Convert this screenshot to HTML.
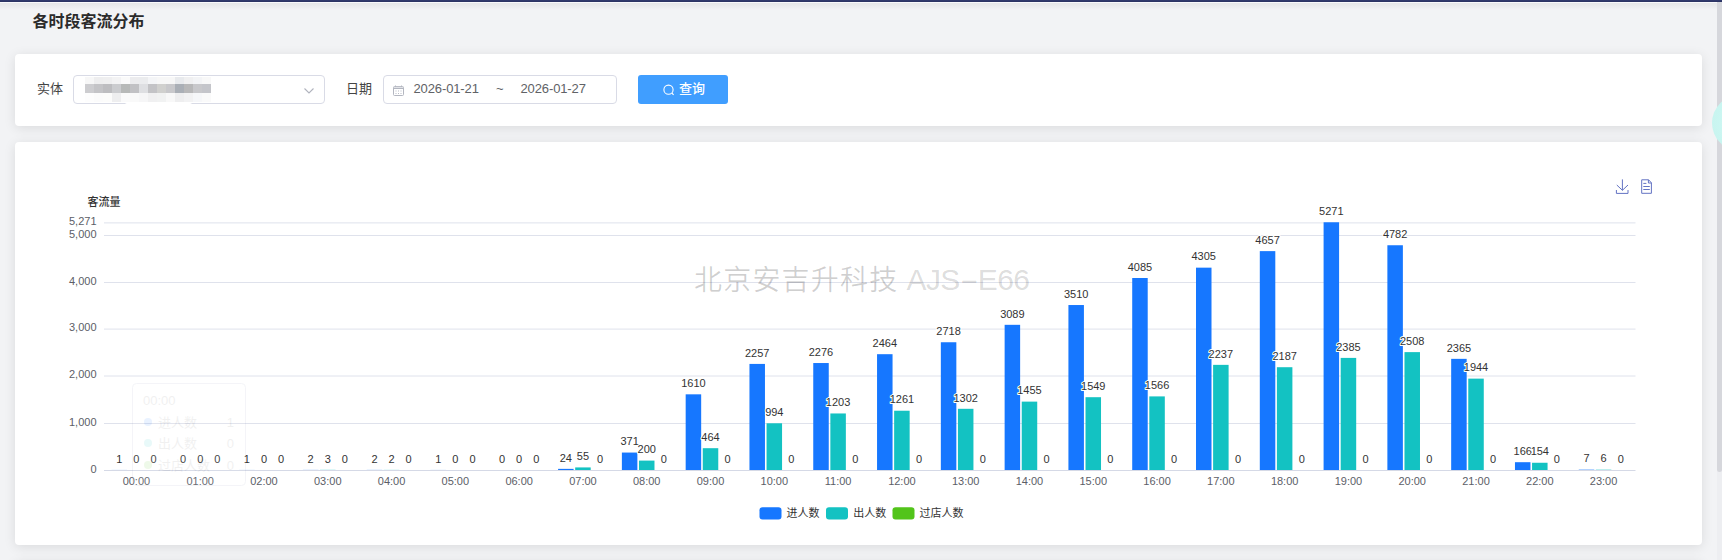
<!DOCTYPE html>
<html lang="zh-CN"><head><meta charset="utf-8"><title>各时段客流分布</title>
<style>
html,body{margin:0;padding:0}
body{width:1722px;height:560px;overflow:hidden;position:relative;background:#f2f3f5;font-family:"Liberation Sans","Noto Sans CJK SC",sans-serif;color:#333}
.topbar{position:absolute;left:0;top:0;width:1722px;height:2px;background:linear-gradient(#323c70,#2a3260)}
.topline{position:absolute;left:0;top:2px;width:1722px;height:1px;background:#f9f9fb}
.topsh{position:absolute;left:0;top:3px;width:1722px;height:7px;background:linear-gradient(rgba(0,0,0,.055),rgba(0,0,0,0))}
.title{position:absolute;left:32.5px;top:11px;font-size:16px;font-weight:700;line-height:22px;color:#2b2b2b;letter-spacing:0}
.card{position:absolute;background:#fff;border-radius:4px;box-shadow:0 2px 12px 0 rgba(0,0,0,.1)}
.c1{left:15px;top:54px;width:1687px;height:72px}
.c2{left:15px;top:142px;width:1687px;height:403px}
.c3{left:15px;top:561px;width:1687px;height:100px}
.lbl{position:absolute;font-size:13px;line-height:18px;color:#444;top:80px}
.box{position:absolute;top:75px;height:27px;border:1px solid #d9dbe6;border-radius:4px;background:#fff}
.box span{position:absolute;top:4.5px;font-size:13px;letter-spacing:-0.12px;line-height:16px;color:#606266;white-space:nowrap}
.mos i{position:absolute;width:9.1px;height:9px;display:block}
.mos b{position:absolute;display:block;background:#fff}
.btn{position:absolute;left:638px;top:75px;width:90px;height:29px;border-radius:3px;background:#409eff;color:#fff;font-size:13px;font-weight:500}
.btn span{position:absolute;left:41px;top:5px;line-height:18px}
.chart{position:absolute;left:15px;top:142px}
.chart .v{paint-order:stroke;stroke:#fff;stroke-width:2px;stroke-linejoin:round;letter-spacing:0}
.chart .n{letter-spacing:0}
.sb{position:absolute;left:1717px;top:2px;width:5px;height:558px;background:#edeef1}
.sb b{position:absolute;left:0;top:0;width:5px;height:470px;border-radius:0 0 3px 3px;background:#d6d7dc;display:block}
.bubble{position:absolute;left:1711.5px;top:95px;width:56px;height:56px;border-radius:50%;background:radial-gradient(circle,#d2f8f4 0%,#c8f5f0 70%,#bff0ea 100%)}
</style></head><body>
<div class="topbar"></div><div class="topline"></div><div class="topsh"></div>
<div class="title">各时段客流分布</div>
<div class="card c1"></div>
<div class="lbl" style="left:37px">实体</div>
<div class="box" style="left:73px;width:250px"><svg width="12" height="8" viewBox="0 0 12 8" style="position:absolute;left:229px;top:11px"><path d="M1.5 1.5L6 6L10.5 1.5" fill="none" stroke="#b0b3bd" stroke-width="1.1"/></svg></div>
<div class="mos"><b style="left:123px;top:100px;width:71px;height:8px;border-radius:0 0 40px 40px/0 0 8px 8px"></b><i style="left:84.90px;top:77px;height:7px;background:#f7f7f7"></i><i style="left:84.90px;top:84px;background:rgb(205, 205, 208)"></i><i style="left:84.90px;top:93px;background:#fdfdfd"></i><i style="left:93.92px;top:77px;height:7px;background:#eeeeef"></i><i style="left:93.92px;top:84px;background:rgb(196, 196, 199)"></i><i style="left:93.92px;top:93px;background:#fbfbfb"></i><i style="left:102.93px;top:77px;height:7px;background:#efeff0"></i><i style="left:102.93px;top:84px;background:rgb(189, 189, 192)"></i><i style="left:102.93px;top:93px;background:#fcfcfb"></i><i style="left:111.95px;top:77px;height:7px;background:#f3f3f4"></i><i style="left:111.95px;top:84px;background:rgb(203, 204, 207)"></i><i style="left:111.95px;top:93px;background:#eeeeef"></i><i style="left:120.96px;top:77px;height:7px;background:#fafafa"></i><i style="left:120.96px;top:84px;background:rgb(183, 185, 184)"></i><i style="left:120.96px;top:93px;background:#fafafa"></i><i style="left:129.98px;top:77px;height:7px;background:#ececee"></i><i style="left:129.98px;top:84px;background:rgb(193, 193, 196)"></i><i style="left:129.98px;top:93px;background:#f9f9f9"></i><i style="left:138.99px;top:77px;height:7px;background:#ebecee"></i><i style="left:138.99px;top:84px;background:rgb(222, 223, 226)"></i><i style="left:138.99px;top:93px;background:#f6f6f7"></i><i style="left:148.00px;top:77px;height:7px;background:#f4f5f7"></i><i style="left:148.00px;top:84px;background:rgb(195, 195, 198)"></i><i style="left:148.00px;top:93px;background:#f0f0f1"></i><i style="left:157.02px;top:77px;height:7px;background:#f7f7f7"></i><i style="left:157.02px;top:84px;background:rgb(208, 208, 206)"></i><i style="left:157.02px;top:93px;background:#f1f2f2"></i><i style="left:166.04px;top:77px;height:7px;background:#f7f7f7"></i><i style="left:166.04px;top:84px;background:rgb(200, 200, 203)"></i><i style="left:166.04px;top:93px;background:#f8f8f8"></i><i style="left:175.05px;top:77px;height:7px;background:#e8eaed"></i><i style="left:175.05px;top:84px;background:rgb(170, 175, 182)"></i><i style="left:175.05px;top:93px;background:#eeeeef"></i><i style="left:184.06px;top:77px;height:7px;background:#f0f0f1"></i><i style="left:184.06px;top:84px;background:rgb(184, 184, 185)"></i><i style="left:184.06px;top:93px;background:#f2f2f3"></i><i style="left:193.08px;top:77px;height:7px;background:#f3f4f6"></i><i style="left:193.08px;top:84px;background:rgb(200, 200, 203)"></i><i style="left:193.08px;top:93px;background:#f6f7f9"></i><i style="left:202.10px;top:77px;height:7px;background:#f8f8f8"></i><i style="left:202.10px;top:84px;background:rgb(196, 197, 202)"></i><i style="left:202.10px;top:93px;background:#fafafa"></i></div>
<div class="lbl" style="left:346px">日期</div>
<div class="box" style="left:383px;width:232px">
<svg width="11" height="11" viewBox="0 0 11 11" style="position:absolute;left:9px;top:9px"><rect x="0.5" y="1.5" width="10" height="9" rx="1" fill="none" stroke="#b3b6c0"/><path d="M0.5 3.5H10.5" stroke="#b3b6c0"/><path d="M1 2H10" stroke="#c4c7cf"/><path d="M2.5 0.5V2M8.5 0.5V2" stroke="#b3b6c0"/><path d="M2.5 6H3.5M5 6H6M7.5 6H8.5M2.5 8.5H3.5M5 8.5H6M7.5 8.5H8.5" stroke="#b9bcc5" stroke-width="1.2"/></svg>
<span style="left:29.5px">2026-01-21</span><span style="left:112px">~</span><span style="left:136.5px">2026-01-27</span></div>
<div class="btn"><svg width="14" height="14" viewBox="0 0 14 14" style="position:absolute;left:24px;top:8px"><circle cx="6.5" cy="6.7" r="4.6" fill="none" stroke="#fff" stroke-width="1.1"/><path d="M9.8 10L11.6 11.8" stroke="#fff" stroke-width="1.1" fill="none"/></svg><span>查询</span></div>
<div class="card c2"></div><div class="card c3"></div>
<svg class="chart" width="1687" height="403" viewBox="15 142 1687 403" font-family="Liberation Sans, Noto Sans CJK SC, sans-serif">
<line x1="104" x2="1635.5" y1="470.50" y2="470.50" stroke="#d5d9e6" stroke-width="1"/>
<text x="96.5" y="472.50" font-size="11" fill="#5c5e67" text-anchor="end" class="n">0</text>
<line x1="104" x2="1635.5" y1="423.50" y2="423.50" stroke="#dfe2ec" stroke-width="1"/>
<text x="96.5" y="425.50" font-size="11" fill="#5c5e67" text-anchor="end" class="n">1,000</text>
<line x1="104" x2="1635.5" y1="376.00" y2="376.00" stroke="#dfe2ec" stroke-width="1"/>
<text x="96.5" y="378.00" font-size="11" fill="#5c5e67" text-anchor="end" class="n">2,000</text>
<line x1="104" x2="1635.5" y1="329.10" y2="329.10" stroke="#dfe2ec" stroke-width="1"/>
<text x="96.5" y="331.10" font-size="11" fill="#5c5e67" text-anchor="end" class="n">3,000</text>
<line x1="104" x2="1635.5" y1="282.50" y2="282.50" stroke="#dfe2ec" stroke-width="1"/>
<text x="96.5" y="284.50" font-size="11" fill="#5c5e67" text-anchor="end" class="n">4,000</text>
<line x1="104" x2="1635.5" y1="235.50" y2="235.50" stroke="#dfe2ec" stroke-width="1"/>
<text x="96.5" y="237.50" font-size="11" fill="#5c5e67" text-anchor="end" class="n">5,000</text>
<line x1="104" x2="1635.5" y1="222.90" y2="222.90" stroke="#dfe2ec" stroke-width="1"/>
<text x="96.5" y="224.90" font-size="11" fill="#5c5e67" text-anchor="end" class="n">5,271</text>
<text x="104" y="206" font-size="11" fill="#333" text-anchor="middle" font-weight="500">客流量</text>
<rect x="111.55" y="469.95" width="15.5" height="0.05" fill="#1677ff"/>
<rect x="239.13" y="469.95" width="15.5" height="0.05" fill="#1677ff"/>
<rect x="302.92" y="469.91" width="15.5" height="0.09" fill="#1677ff"/>
<rect x="320.02" y="469.86" width="15.5" height="0.14" fill="#13c2c2"/>
<rect x="366.71" y="469.91" width="15.5" height="0.09" fill="#1677ff"/>
<rect x="383.81" y="469.91" width="15.5" height="0.09" fill="#13c2c2"/>
<rect x="430.50" y="469.95" width="15.5" height="0.05" fill="#1677ff"/>
<rect x="558.09" y="468.87" width="15.5" height="1.13" fill="#1677ff"/>
<rect x="575.19" y="467.42" width="15.5" height="2.58" fill="#13c2c2"/>
<rect x="621.88" y="452.56" width="15.5" height="17.44" fill="#1677ff"/>
<rect x="638.98" y="460.60" width="15.5" height="9.40" fill="#13c2c2"/>
<rect x="685.67" y="394.33" width="15.5" height="75.67" fill="#1677ff"/>
<rect x="702.77" y="448.19" width="15.5" height="21.81" fill="#13c2c2"/>
<rect x="749.46" y="363.92" width="15.5" height="106.08" fill="#1677ff"/>
<rect x="766.56" y="423.28" width="15.5" height="46.72" fill="#13c2c2"/>
<rect x="813.25" y="363.03" width="15.5" height="106.97" fill="#1677ff"/>
<rect x="830.35" y="413.46" width="15.5" height="56.54" fill="#13c2c2"/>
<rect x="877.05" y="354.19" width="15.5" height="115.81" fill="#1677ff"/>
<rect x="894.15" y="410.73" width="15.5" height="59.27" fill="#13c2c2"/>
<rect x="940.84" y="342.25" width="15.5" height="127.75" fill="#1677ff"/>
<rect x="957.94" y="408.81" width="15.5" height="61.19" fill="#13c2c2"/>
<rect x="1004.63" y="324.82" width="15.5" height="145.18" fill="#1677ff"/>
<rect x="1021.73" y="401.62" width="15.5" height="68.39" fill="#13c2c2"/>
<rect x="1068.42" y="305.03" width="15.5" height="164.97" fill="#1677ff"/>
<rect x="1085.52" y="397.20" width="15.5" height="72.80" fill="#13c2c2"/>
<rect x="1132.21" y="278.00" width="15.5" height="192.00" fill="#1677ff"/>
<rect x="1149.31" y="396.40" width="15.5" height="73.60" fill="#13c2c2"/>
<rect x="1196.00" y="267.66" width="15.5" height="202.34" fill="#1677ff"/>
<rect x="1213.10" y="364.86" width="15.5" height="105.14" fill="#13c2c2"/>
<rect x="1259.80" y="251.12" width="15.5" height="218.88" fill="#1677ff"/>
<rect x="1276.90" y="367.21" width="15.5" height="102.79" fill="#13c2c2"/>
<rect x="1323.59" y="222.26" width="15.5" height="247.74" fill="#1677ff"/>
<rect x="1340.69" y="357.90" width="15.5" height="112.09" fill="#13c2c2"/>
<rect x="1387.38" y="245.25" width="15.5" height="224.75" fill="#1677ff"/>
<rect x="1404.48" y="352.12" width="15.5" height="117.88" fill="#13c2c2"/>
<rect x="1451.17" y="358.85" width="15.5" height="111.16" fill="#1677ff"/>
<rect x="1468.27" y="378.63" width="15.5" height="91.37" fill="#13c2c2"/>
<rect x="1514.96" y="462.20" width="15.5" height="7.80" fill="#1677ff"/>
<rect x="1532.06" y="462.76" width="15.5" height="7.24" fill="#13c2c2"/>
<rect x="1578.75" y="469.67" width="15.5" height="0.33" fill="#1677ff"/>
<rect x="1595.85" y="469.72" width="15.5" height="0.28" fill="#13c2c2"/>
<text x="119.30" y="462.65" font-size="11" fill="#333" text-anchor="middle" class="v">1</text>
<text x="136.40" y="462.70" font-size="11" fill="#333" text-anchor="middle" class="v">0</text>
<text x="153.50" y="462.70" font-size="11" fill="#333" text-anchor="middle" class="v">0</text>
<text x="136.40" y="485" font-size="11" fill="#5c5e67" text-anchor="middle" class="n">00:00</text>
<text x="183.09" y="462.70" font-size="11" fill="#333" text-anchor="middle" class="v">0</text>
<text x="200.19" y="462.70" font-size="11" fill="#333" text-anchor="middle" class="v">0</text>
<text x="217.29" y="462.70" font-size="11" fill="#333" text-anchor="middle" class="v">0</text>
<text x="200.19" y="485" font-size="11" fill="#5c5e67" text-anchor="middle" class="n">01:00</text>
<text x="246.88" y="462.65" font-size="11" fill="#333" text-anchor="middle" class="v">1</text>
<text x="263.98" y="462.70" font-size="11" fill="#333" text-anchor="middle" class="v">0</text>
<text x="281.08" y="462.70" font-size="11" fill="#333" text-anchor="middle" class="v">0</text>
<text x="263.98" y="485" font-size="11" fill="#5c5e67" text-anchor="middle" class="n">02:00</text>
<text x="310.67" y="462.61" font-size="11" fill="#333" text-anchor="middle" class="v">2</text>
<text x="327.77" y="462.56" font-size="11" fill="#333" text-anchor="middle" class="v">3</text>
<text x="344.87" y="462.70" font-size="11" fill="#333" text-anchor="middle" class="v">0</text>
<text x="327.77" y="485" font-size="11" fill="#5c5e67" text-anchor="middle" class="n">03:00</text>
<text x="374.46" y="462.61" font-size="11" fill="#333" text-anchor="middle" class="v">2</text>
<text x="391.56" y="462.61" font-size="11" fill="#333" text-anchor="middle" class="v">2</text>
<text x="408.66" y="462.70" font-size="11" fill="#333" text-anchor="middle" class="v">0</text>
<text x="391.56" y="485" font-size="11" fill="#5c5e67" text-anchor="middle" class="n">04:00</text>
<text x="438.25" y="462.65" font-size="11" fill="#333" text-anchor="middle" class="v">1</text>
<text x="455.35" y="462.70" font-size="11" fill="#333" text-anchor="middle" class="v">0</text>
<text x="472.45" y="462.70" font-size="11" fill="#333" text-anchor="middle" class="v">0</text>
<text x="455.35" y="485" font-size="11" fill="#5c5e67" text-anchor="middle" class="n">05:00</text>
<text x="502.05" y="462.70" font-size="11" fill="#333" text-anchor="middle" class="v">0</text>
<text x="519.15" y="462.70" font-size="11" fill="#333" text-anchor="middle" class="v">0</text>
<text x="536.25" y="462.70" font-size="11" fill="#333" text-anchor="middle" class="v">0</text>
<text x="519.15" y="485" font-size="11" fill="#5c5e67" text-anchor="middle" class="n">06:00</text>
<text x="565.84" y="461.57" font-size="11" fill="#333" text-anchor="middle" class="v">24</text>
<text x="582.94" y="460.12" font-size="11" fill="#333" text-anchor="middle" class="v">55</text>
<text x="600.04" y="462.70" font-size="11" fill="#333" text-anchor="middle" class="v">0</text>
<text x="582.94" y="485" font-size="11" fill="#5c5e67" text-anchor="middle" class="n">07:00</text>
<text x="629.63" y="445.26" font-size="11" fill="#333" text-anchor="middle" class="v">371</text>
<text x="646.73" y="453.30" font-size="11" fill="#333" text-anchor="middle" class="v">200</text>
<text x="663.83" y="462.70" font-size="11" fill="#333" text-anchor="middle" class="v">0</text>
<text x="646.73" y="485" font-size="11" fill="#5c5e67" text-anchor="middle" class="n">08:00</text>
<text x="693.42" y="387.03" font-size="11" fill="#333" text-anchor="middle" class="v">1610</text>
<text x="710.52" y="440.89" font-size="11" fill="#333" text-anchor="middle" class="v">464</text>
<text x="727.62" y="462.70" font-size="11" fill="#333" text-anchor="middle" class="v">0</text>
<text x="710.52" y="485" font-size="11" fill="#5c5e67" text-anchor="middle" class="n">09:00</text>
<text x="757.21" y="356.62" font-size="11" fill="#333" text-anchor="middle" class="v">2257</text>
<text x="774.31" y="415.98" font-size="11" fill="#333" text-anchor="middle" class="v">994</text>
<text x="791.41" y="462.70" font-size="11" fill="#333" text-anchor="middle" class="v">0</text>
<text x="774.31" y="485" font-size="11" fill="#5c5e67" text-anchor="middle" class="n">10:00</text>
<text x="821.00" y="355.73" font-size="11" fill="#333" text-anchor="middle" class="v">2276</text>
<text x="838.10" y="406.16" font-size="11" fill="#333" text-anchor="middle" class="v">1203</text>
<text x="855.20" y="462.70" font-size="11" fill="#333" text-anchor="middle" class="v">0</text>
<text x="838.10" y="485" font-size="11" fill="#5c5e67" text-anchor="middle" class="n">11:00</text>
<text x="884.80" y="346.89" font-size="11" fill="#333" text-anchor="middle" class="v">2464</text>
<text x="901.90" y="403.43" font-size="11" fill="#333" text-anchor="middle" class="v">1261</text>
<text x="919.00" y="462.70" font-size="11" fill="#333" text-anchor="middle" class="v">0</text>
<text x="901.90" y="485" font-size="11" fill="#5c5e67" text-anchor="middle" class="n">12:00</text>
<text x="948.59" y="334.95" font-size="11" fill="#333" text-anchor="middle" class="v">2718</text>
<text x="965.69" y="401.51" font-size="11" fill="#333" text-anchor="middle" class="v">1302</text>
<text x="982.79" y="462.70" font-size="11" fill="#333" text-anchor="middle" class="v">0</text>
<text x="965.69" y="485" font-size="11" fill="#5c5e67" text-anchor="middle" class="n">13:00</text>
<text x="1012.38" y="317.52" font-size="11" fill="#333" text-anchor="middle" class="v">3089</text>
<text x="1029.48" y="394.31" font-size="11" fill="#333" text-anchor="middle" class="v">1455</text>
<text x="1046.58" y="462.70" font-size="11" fill="#333" text-anchor="middle" class="v">0</text>
<text x="1029.48" y="485" font-size="11" fill="#5c5e67" text-anchor="middle" class="n">14:00</text>
<text x="1076.17" y="297.73" font-size="11" fill="#333" text-anchor="middle" class="v">3510</text>
<text x="1093.27" y="389.90" font-size="11" fill="#333" text-anchor="middle" class="v">1549</text>
<text x="1110.37" y="462.70" font-size="11" fill="#333" text-anchor="middle" class="v">0</text>
<text x="1093.27" y="485" font-size="11" fill="#5c5e67" text-anchor="middle" class="n">15:00</text>
<text x="1139.96" y="270.70" font-size="11" fill="#333" text-anchor="middle" class="v">4085</text>
<text x="1157.06" y="389.10" font-size="11" fill="#333" text-anchor="middle" class="v">1566</text>
<text x="1174.16" y="462.70" font-size="11" fill="#333" text-anchor="middle" class="v">0</text>
<text x="1157.06" y="485" font-size="11" fill="#5c5e67" text-anchor="middle" class="n">16:00</text>
<text x="1203.75" y="260.36" font-size="11" fill="#333" text-anchor="middle" class="v">4305</text>
<text x="1220.85" y="357.56" font-size="11" fill="#333" text-anchor="middle" class="v">2237</text>
<text x="1237.95" y="462.70" font-size="11" fill="#333" text-anchor="middle" class="v">0</text>
<text x="1220.85" y="485" font-size="11" fill="#5c5e67" text-anchor="middle" class="n">17:00</text>
<text x="1267.55" y="243.82" font-size="11" fill="#333" text-anchor="middle" class="v">4657</text>
<text x="1284.65" y="359.91" font-size="11" fill="#333" text-anchor="middle" class="v">2187</text>
<text x="1301.75" y="462.70" font-size="11" fill="#333" text-anchor="middle" class="v">0</text>
<text x="1284.65" y="485" font-size="11" fill="#5c5e67" text-anchor="middle" class="n">18:00</text>
<text x="1331.34" y="214.96" font-size="11" fill="#333" text-anchor="middle" class="v">5271</text>
<text x="1348.44" y="350.60" font-size="11" fill="#333" text-anchor="middle" class="v">2385</text>
<text x="1365.54" y="462.70" font-size="11" fill="#333" text-anchor="middle" class="v">0</text>
<text x="1348.44" y="485" font-size="11" fill="#5c5e67" text-anchor="middle" class="n">19:00</text>
<text x="1395.13" y="237.95" font-size="11" fill="#333" text-anchor="middle" class="v">4782</text>
<text x="1412.23" y="344.82" font-size="11" fill="#333" text-anchor="middle" class="v">2508</text>
<text x="1429.33" y="462.70" font-size="11" fill="#333" text-anchor="middle" class="v">0</text>
<text x="1412.23" y="485" font-size="11" fill="#5c5e67" text-anchor="middle" class="n">20:00</text>
<text x="1458.92" y="351.55" font-size="11" fill="#333" text-anchor="middle" class="v">2365</text>
<text x="1476.02" y="371.33" font-size="11" fill="#333" text-anchor="middle" class="v">1944</text>
<text x="1493.12" y="462.70" font-size="11" fill="#333" text-anchor="middle" class="v">0</text>
<text x="1476.02" y="485" font-size="11" fill="#5c5e67" text-anchor="middle" class="n">21:00</text>
<text x="1522.71" y="454.90" font-size="11" fill="#333" text-anchor="middle" class="v">166</text>
<text x="1539.81" y="455.46" font-size="11" fill="#333" text-anchor="middle" class="v">154</text>
<text x="1556.91" y="462.70" font-size="11" fill="#333" text-anchor="middle" class="v">0</text>
<text x="1539.81" y="485" font-size="11" fill="#5c5e67" text-anchor="middle" class="n">22:00</text>
<text x="1586.50" y="462.37" font-size="11" fill="#333" text-anchor="middle" class="v">7</text>
<text x="1603.60" y="462.42" font-size="11" fill="#333" text-anchor="middle" class="v">6</text>
<text x="1620.70" y="462.70" font-size="11" fill="#333" text-anchor="middle" class="v">0</text>
<text x="1603.60" y="485" font-size="11" fill="#5c5e67" text-anchor="middle" class="n">23:00</text>
<rect x="759.5" y="507.2" width="22" height="12.3" rx="3" fill="#1677ff"/>
<text x="786.5" y="516.7" font-size="11" fill="#333">进人数</text>
<rect x="826" y="507.2" width="22" height="12.3" rx="3" fill="#13c2c2"/>
<text x="853.3" y="516.7" font-size="11" fill="#333">出人数</text>
<rect x="892.5" y="507.2" width="22" height="12.3" rx="3" fill="#52c41a"/>
<text x="919.5" y="516.7" font-size="11" fill="#333">过店人数</text>
<g fill="none" stroke="#6373c3" stroke-width="1" stroke-linecap="butt" stroke-linejoin="miter"><path d="M1622.4 179.4V190.3M1616.8 185L1622.4 190.3L1628 185M1616.4 190V193.4H1628V190"/><path d="M1641.7 179.8H1648.6L1651.4 182.8V193.3H1641.7ZM1648.4 179.8V183H1651.4M1643.3 183.4H1646.4M1643.3 186.5H1649.8M1643.3 189.5H1649.8"/></g>
<text x="694" y="289.5" font-size="28" font-weight="350" fill="#000" fill-opacity="0.19" letter-spacing="1.2">北京安吉升科技 <tspan x="906.5" font-size="30" font-weight="400" fill-opacity="0.15" letter-spacing="-0.6">AJS<tspan textLength="18" lengthAdjust="spacingAndGlyphs">-</tspan>E66</tspan></text>
<g opacity="0.09"><rect x="132.5" y="383.5" width="113" height="102" rx="4" fill="#fff" stroke="#8a94b8"/><text x="143" y="405" font-size="13" fill="#666">00:00</text><circle cx="148" cy="422" r="4" fill="#1677ff"/><text x="158" y="427" font-size="13" fill="#666">进人数</text><text x="234" y="427" font-size="13" fill="#666" text-anchor="end">1</text><circle cx="148" cy="443" r="4" fill="#13c2c2"/><text x="158" y="448" font-size="13" fill="#666">出人数</text><text x="234" y="448" font-size="13" fill="#666" text-anchor="end">0</text><circle cx="148" cy="465" r="4" fill="#52c41a"/><text x="158" y="470" font-size="13" fill="#666">过店人数</text><text x="234" y="470" font-size="13" fill="#666" text-anchor="end">0</text></g>
</svg>
<div class="sb"><b></b></div>
<div class="bubble"></div>
</body></html>
